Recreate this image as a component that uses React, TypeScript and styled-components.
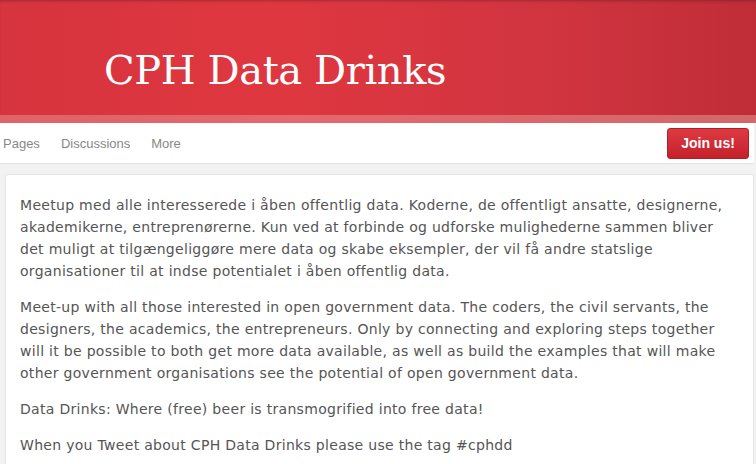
import React from 'react'
import styled, { createGlobalStyle } from 'styled-components'

const GlobalStyle = createGlobalStyle`
  html, body {
    margin: 0;
    padding: 0;
    background: #f2f2f2;
    overflow: hidden;
  }
`

const Banner = styled.header`
  height: 115px;
  background: linear-gradient(to right, #d6343e 0%, #df3740 35%, #d23540 70%, #c02d37 100%);
  box-shadow: inset 0 3px 3px -2px rgba(0, 0, 0, 0.25);
  display: flex;
  align-items: flex-end;
  padding-left: 104px;
  box-sizing: border-box;
`
const Title = styled.h1`
  margin: 0 0 25px 0;
  color: #fff;
  font-family: 'DejaVu Serif', 'Liberation Serif', serif;
  font-weight: normal;
  font-size: 40px;
  line-height: 1;
  letter-spacing: -0.4px;
`
const Stripe = styled.div`
  height: 8px;
  background: linear-gradient(to right, #de6468, #e4686c 40%, #d3676a);
`
const NavBar = styled.nav`
  height: 40px;
  margin-right: 2px;
  background: #fff;
  border-bottom: 1px solid #e3e3e3;
  display: flex;
  align-items: center;
  padding: 0 5px 0 3px;
`
const NavLinks = styled.div`
  display: flex;
  gap: 21px;
  flex: 1;
`
const NavLink = styled.a`
  font-family: 'Liberation Sans', Arial, sans-serif;
  font-size: 13px;
  color: #888;
  text-decoration: none;
`
const JoinButton = styled.button`
  width: 82px;
  height: 31px;
  border: 1px solid #b21e27;
  border-radius: 3px;
  background: linear-gradient(to bottom, #dd3a42, #c4212b);
  color: #fff;
  font-family: 'Liberation Sans', Arial, sans-serif;
  font-weight: bold;
  font-size: 14px;
  cursor: pointer;
`
const Main = styled.main`
  padding: 10px 2px 0 5px;
`
const Card = styled.section`
  background: #fff;
  border: 1px solid #e4e4e4;
  border-radius: 3px;
  padding: 19px 14px 10px 14px;
`
const Para = styled.p`
  margin: 0 0 14px 0;
  color: #555;
  line-height: 22px;
  font-family: 'DejaVu Sans', Verdana, sans-serif;
  font-size: 14px;
  letter-spacing: 0.3px;
`

export default function App() {
  return (
    <>
      <GlobalStyle />
      <Banner>
        <Title>CPH Data Drinks</Title>
      </Banner>
      <Stripe />
      <NavBar>
        <NavLinks>
          <NavLink href="#">Pages</NavLink>
          <NavLink href="#">Discussions</NavLink>
          <NavLink href="#">More</NavLink>
        </NavLinks>
        <JoinButton>Join us!</JoinButton>
      </NavBar>
      <Main>
        <Card>
          <Para>
            Meetup med alle interesserede i åben offentlig data. Koderne, de offentligt ansatte, designerne,
            akademikerne, entreprenørerne. Kun ved at forbinde og udforske mulighederne sammen bliver det muligt
            at tilgængeliggøre mere data og skabe eksempler, der vil få andre statslige organisationer til at
            indse potentialet i åben offentlig data.
          </Para>
          <Para>
            Meet-up with all those interested in open government data. The coders, the civil servants, the
            designers, the academics, the entrepreneurs. Only by connecting and exploring steps together will it
            be possible to both get more data available, as well as build the examples that will make other
            government organisations see the potential of open government data.
          </Para>
          <Para>Data Drinks: Where (free) beer is transmogrified into free data!</Para>
          <Para>When you Tweet about CPH Data Drinks please use the tag #cphdd</Para>
        </Card>
      </Main>
    </>
  )
}
